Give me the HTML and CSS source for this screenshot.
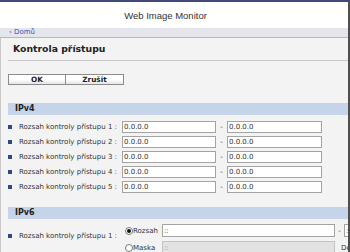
FILE: index.html
```html
<!DOCTYPE html>
<html lang="cs">
<head>
<meta charset="UTF-8">
<title>Web Image Monitor - Kontrola přístupu</title>
<link rel="stylesheet" href="styles.css">
</head>
<body>
<div class="window">
  <header class="top">Web Image Monitor</header>
  <nav class="crumbs"><a href="#">‹ Domů</a></nav>

  <main class="content">
    <h1>Kontrola přístupu</h1>

    <div class="actions">
      <button>OK</button>
      <button>Zrušit</button>
    </div>

    <!-- IPv4 -->
    <section class="group">
      <h2>IPv4</h2>
      <div class="rows">
        <div class="row"><span class="bullet"></span><label>Rozsah kontroly přístupu 1 :</label><input type="text" value="0.0.0.0"><span class="dash">-</span><input type="text" value="0.0.0.0"></div>
        <div class="row"><span class="bullet"></span><label>Rozsah kontroly přístupu 2 :</label><input type="text" value="0.0.0.0"><span class="dash">-</span><input type="text" value="0.0.0.0"></div>
        <div class="row"><span class="bullet"></span><label>Rozsah kontroly přístupu 3 :</label><input type="text" value="0.0.0.0"><span class="dash">-</span><input type="text" value="0.0.0.0"></div>
        <div class="row"><span class="bullet"></span><label>Rozsah kontroly přístupu 4 :</label><input type="text" value="0.0.0.0"><span class="dash">-</span><input type="text" value="0.0.0.0"></div>
        <div class="row"><span class="bullet"></span><label>Rozsah kontroly přístupu 5 :</label><input type="text" value="0.0.0.0"><span class="dash">-</span><input type="text" value="0.0.0.0"></div>
      </div>
    </section>

    <!-- IPv6 -->
    <section class="group">
      <h2>IPv6</h2>
      <div class="rows rows6">
        <div class="row6">
          <span class="bullet"></span><label>Rozsah kontroly přístupu 1 :</label>
          <div class="opts">
            <div class="opt">
              <input type="radio" name="m1" checked><span class="opt-name">Rozsah</span>
              <input type="text" value="::"><span class="dash">-</span><input type="text" value="::">
            </div>
            <div class="opt">
              <input type="radio" name="m1"><span class="opt-name">Maska</span>
              <input type="text" value="::" disabled><span class="opt-name prefix">Délka prefixu</span>
            </div>
          </div>
        </div>
      </div>
    </section>
  </main>
</div>
</body>
</html>
```

FILE: styles.css
```css
*{box-sizing:border-box}
html,body{margin:0;padding:0;height:100%;overflow:hidden}
body{
  font-family:"DejaVu Sans",Verdana,sans-serif;font-size:7px;color:#333;
  background:#fff
}
.window{
  width:350px;height:252px;overflow:hidden;
  border-top:2px solid #41497a;border-right:2px solid #4f4f4f;
  display:flex;flex-direction:column
}

/* ===== header ===== */
.top{
  height:26px;flex:none;display:flex;align-items:center;justify-content:center;
  padding-right:17px;background:#fff;color:#333;
  font:9.5px "Liberation Sans",Arial,sans-serif
}
.crumbs{
  height:10px;flex:none;background:#e5e6eb;border-bottom:1px solid #b9b9b9;
  padding-left:9px;line-height:9px
}
.crumbs a{color:#3558b4;text-decoration:none}

/* ===== content ===== */
.content{
  flex:1;background:#f3f3f3;border-left:1px solid #c9c9c9;padding-left:7px;
  min-width:0
}
h1{
  margin:0;height:23px;line-height:22px;padding-left:5px;
  font-size:9.3px;font-weight:700;color:#222;border-bottom:1px solid #cacaca
}
.actions{display:flex;margin:13px 0 18px}
.actions button{
  width:58px;height:11px;padding:0;margin:0;
  border:1px solid #8c8c8c;background:linear-gradient(#fff 50%,#e4e4e4);
  font:700 7.3px "DejaVu Sans",Verdana,sans-serif;color:#222;line-height:9px
}
.actions button+button{border-left:none}

/* ===== groups ===== */
.group h2{
  margin:0;height:12px;line-height:12px;padding-left:7px;
  background:#c5d4e9;font-size:8px;font-weight:700;color:#222
}
.rows{padding:4px 0 13px}
.row{
  display:grid;grid-template-columns:11px 103px 94px 11px 95px;
  align-items:center;height:15px
}
.bullet{width:4px;height:4px;background:#2f4a7e}
label{white-space:nowrap;color:#333}
input[type=text]{
  height:12px;width:100%;margin:0;padding:0 1px;
  border:1px solid #a3a3a3;background:#fff;
  font:7px "DejaVu Sans",Verdana,sans-serif;color:#333
}
input[type=text]:disabled{background:#e2e2e2;color:#888;border-color:#c4c4c4}
.dash{text-align:center}

/* ===== IPv6 ===== */
.rows6{padding-top:3px}
.row6{
  display:grid;grid-template-columns:11px 103px auto;align-items:center
}
.row6 .bullet,.row6 label{margin-bottom:6px}
.opts{display:flex;flex-direction:column;padding-left:3px}
.opt{
  display:grid;grid-template-columns:8px 29px 173px 9px 100px;
  align-items:center;height:17px;white-space:nowrap
}
.opt input[type=text]{height:13px}
.opt .prefix{grid-column:4 / span 2;padding-left:6px}
input[type=radio]{
  appearance:none;margin:0;width:8px;height:8px;border-radius:50%;
  border:1px solid #7a7a7a;background:#fff;display:grid;place-items:center
}
input[type=radio]:checked::after{
  content:"";width:4px;height:4px;border-radius:50%;background:#111
}
.opt-name{color:#333}
```
